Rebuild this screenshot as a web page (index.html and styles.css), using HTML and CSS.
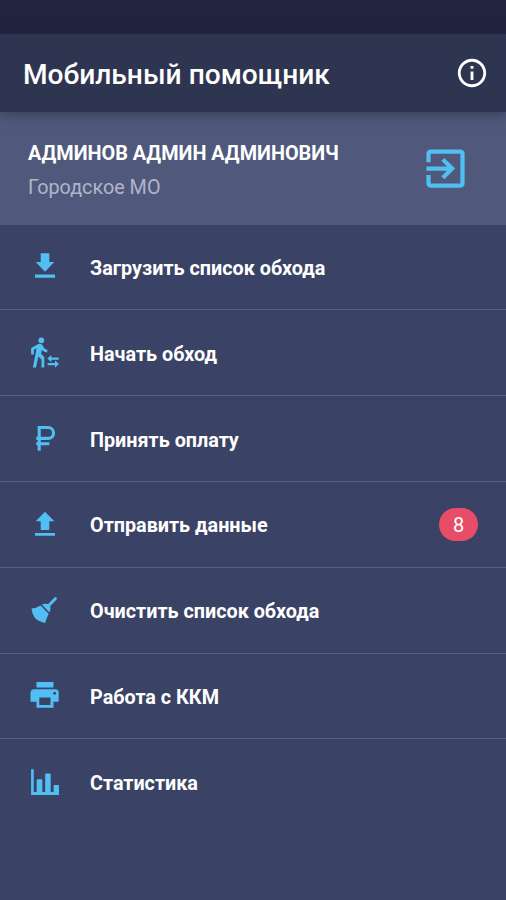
FILE: index.html
```html
<!DOCTYPE html>
<html lang="ru">
<head>
<meta charset="utf-8">
<title>Мобильный помощник</title>
<link rel="stylesheet" href="styles.css">
</head>
<body>
<div class="status-bar"></div>
<header class="toolbar">
  <h1>Мобильный помощник</h1>
  <svg class="info" viewBox="0 0 24 24"><path d="M11 7h2v2h-2zm0 4h2v6h-2zm1-9C6.480 2 2 6.480 2 12s4.480 10 10 10 10-4.480 10-10S17.520 2 12 2zm0 18c-4.410 0-8-3.590-8-8s3.590-8 8-8 8 3.590 8 8-3.590 8-8 8z"/></svg>
</header>
<section class="user">
  <div class="user-text">
    <div class="name">АДМИНОВ АДМИН АДМИНОВИЧ</div>
    <div class="org">Городское МО</div>
  </div>
  <svg class="exit" viewBox="0 0 24 24"><path d="M10.090 15.590L11.500 17l5-5-5-5-1.410 1.410L12.670 11H3v2h9.670l-2.580 2.590zM19 3H5c-1.110 0-2 .9-2 2v4h2V5h14v14H5v-4H3v4c0 1.100.89 2 2 2h14c1.100 0 2-.9 2-2V5c0-1.100-.9-2-2-2z"/></svg>
</section>
<nav class="menu">
  <a class="item">
    <svg class="icon" viewBox="0 0 50 45"><path d="M20.700 9.300h8.600V18h5L25 27.700 15.700 18h5zM15 30.500h20v3.200H15z"/></svg>
    <span>Загрузить список обхода</span>
  </a>
  <a class="item">
    <svg class="icon" viewBox="0 .7 50 45"><circle cx="21.300" cy="11" r="2.900"/><path d="M18.400 14.600Q20 14.200 21.600 15Q22.700 15.600 23.300 17.400Q24.300 20 27.300 20.400V23.100Q23.900 22.900 21.900 20.600L21.100 24.500L24.300 27.700V38.300H21.500V30.200L18.400 27.300L16 38.300H12.900L16.500 19.300L13.900 20.500V25.300H11.100V18.600Z"/><path d="M27.300 29.300L31.300 25.600V28.200H38.700V30.400H31.300V33ZM39 34.800L35 31.100V33.700H27.600V35.900H35V38.500Z"/></svg>
    <span>Начать обход</span>
  </a>
  <a class="item">
    <svg class="icon" viewBox="0 1.300 50 45"><path class="stroke" d="M19.200 36V12.800H28.100A5.400 5.400 0 0 1 28.100 23.700H16.300M16.300 29.100H29.300"/></svg>
    <span>Принять оплату</span>
  </a>
  <a class="item">
    <svg class="icon" viewBox="0 -.7 50 45"><path d="M20.700 27.300h8.600V18.500h5L25 9 15.700 18.500h5zM15 30.200h20v2.900H15z"/></svg>
    <span>Отправить данные</span>
    <b class="badge">8</b>
  </a>
  <a class="item">
    <svg class="icon" viewBox="0 -1.900 50 45"><path d="M34.800 7.300Q35.800 6.900 36.500 7.700Q37.300 8.500 36.600 9.500L30.300 16.100Q31.200 19.500 29.500 22.600L21.700 14.700Q24.900 13.300 28.100 14.100ZM20.500 15.700L28.700 23.900Q26.300 28.500 25.200 33Q17.700 31.400 14.600 27.500Q12 24 11.500 18.700Q16.100 18.600 20.500 15.700Z"/></svg>
    <span>Очистить список обхода</span>
  </a>
  <a class="item">
    <svg class="icon" viewBox="0 -.7 50 45"><path fill-rule="evenodd" d="M16.500 8.300h17v5.600h-17zM14.500 15.500h20.700q3.500 0 3.500 3.500v9h-5.200v6h-17v-6h-6v-8.500q0-4 4-4zM19.300 23.800v7.400h11.200v-7.400zM34.600 18.100a1.500 1.500 0 1 0 0 3a1.500 1.500 0 1 0 0-3z"/></svg>
    <span>Работа с ККМ</span>
  </a>
  <a class="item">
    <svg class="icon" viewBox="0 -.3 50 45"><path d="M11.100 9h2.600v22.700h3V19h5.600v12.700h2.900V13.200h5.500v18.500h2.900v-7h5.400v10H11.100z"/></svg>
    <span>Статистика</span>
  </a>
</nav>
</body>
</html>
```
FILE: styles.css
```css
* { box-sizing: border-box; }
body {
  margin: 0;
  height: 900px;
  overflow: hidden;
  background: #3a4265;
  color: #fff;
  font-family: Roboto, sans-serif;
}
.status-bar { height: 34px; background: #20243f; }
.toolbar {
  height: 78px;
  padding: 0 20px 0 23px;
  display: flex;
  align-items: center;
  justify-content: space-between;
  position: relative;
  background: #2e3551;
  box-shadow: 0 3px 10px rgba(45, 50, 70, .65);
}
h1 { margin: 0; padding-top: 3px; font-size: 28.150px; font-weight: 500; white-space: nowrap; }
.info { width: 34px; height: 34px; fill: #fff; margin-right: -3px; }
.user {
  height: 112.600px;
  padding: 1px 35px 0 28px;
  display: flex;
  align-items: center;
  justify-content: space-between;
  background: #50597c;
}
.user-text { padding-top: 4px; }
.name { font-size: 19.850px; line-height: 24px; font-weight: 700; white-space: nowrap; }
.org { margin-top: 10px; font-size: 19.800px; line-height: 24px; color: #b0b5ca; }
.exit { width: 51px; height: 51px; fill: #51bff3; }
.item {
  height: 85.800px;
  padding: 0 28px 0 20px;
  display: flex;
  align-items: center;
  border-bottom: 1px solid #59617f;
  font-size: 19.800px;
  font-weight: 700;
}
.item span { padding-top: 3px; }
.item:last-child { border-bottom: 0; }
.icon { width: 50px; height: 45px; margin-right: 20px; fill: #51bff3; }
.icon .stroke { fill: none; stroke: #51bff3; stroke-width: 3.100; }
.badge {
  width: 39px;
  height: 33px;
  margin-left: auto;
  border-radius: 17px;
  background: #e84d68;
  font-size: 20px;
  line-height: 34px;
  font-weight: 400;
  text-align: center;
}
```
